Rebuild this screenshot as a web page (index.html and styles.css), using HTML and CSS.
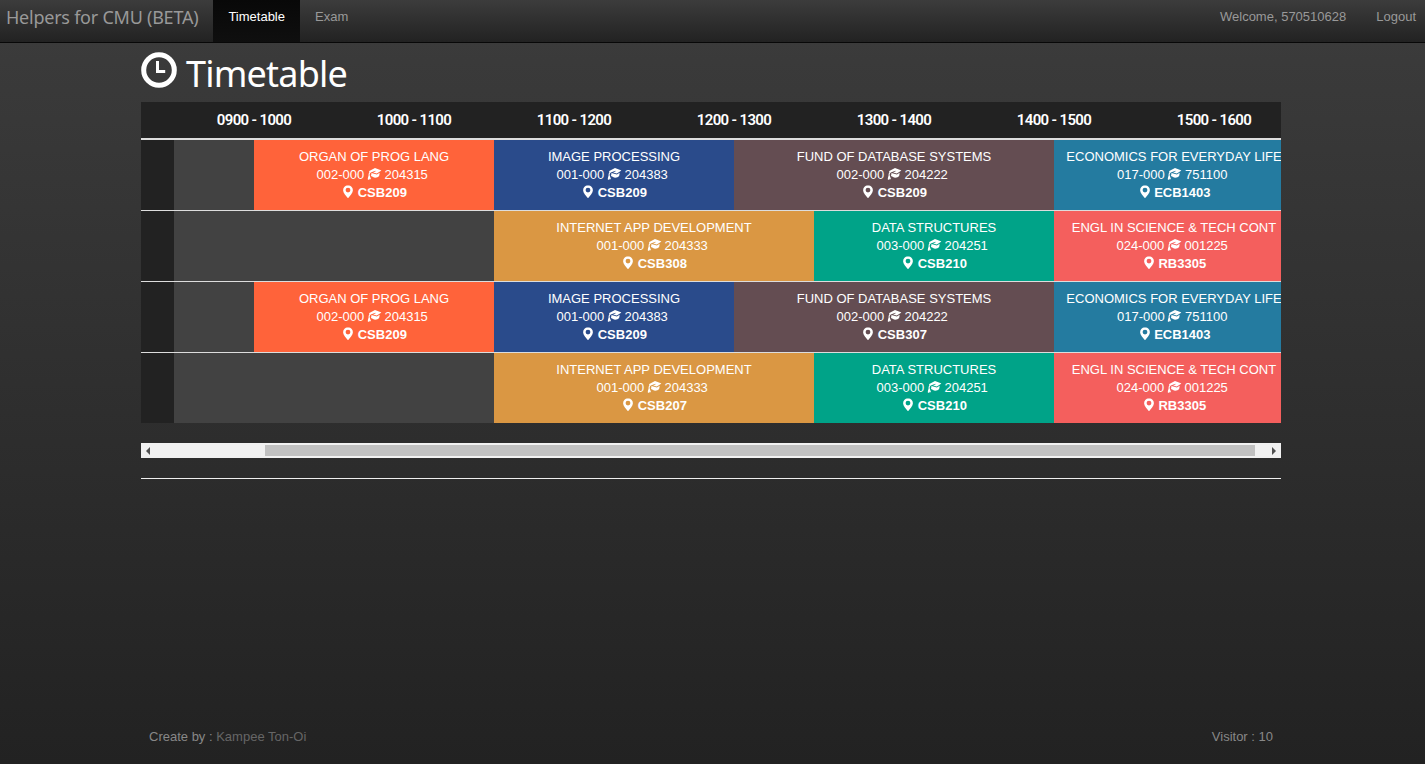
FILE: index.html
```html
<!DOCTYPE html>
<html lang="en">
<head>
<meta charset="utf-8">
<title>Timetable</title>
<link rel="stylesheet" href="styles.css">
</head>
<body>
<svg class="defs" width="0" height="0">
  <symbol id="cap" viewBox="0 0 14 12"><path d="M1.300 3.300 7.500 0 14 2.400 9.300 5.600 5.600 4.500 8.200 3.300 7.900 2.700 3.300 4.400C2.200 5.200 2 6.300 2.300 7.700L3.600 11.400 2.200 10.700 1.600 12 0 11.300 1.100 7.600C1 5.800 1.300 4.700 2.200 4zM4 4.900 9.400 6.500 12.200 4.800 11.700 7.800C9.900 10.200 7 10.300 5.200 8.800L3.500 8.100z"/></symbol>
  <symbol id="pin" viewBox="0 0 11 13"><path fill-rule="evenodd" d="M5.500 0a4.900 4.900 0 0 1 4.900 4.900C10.400 7.700 7.700 9.800 5.500 13 3.300 9.800.6 7.700.6 4.900A4.900 4.900 0 0 1 5.500 0zm0 2.400a2.400 2.400 0 1 0 0 4.800 2.400 2.400 0 0 0 0-4.800z"/></symbol>
</svg>
<nav class="navbar">
  <a class="brand">Helpers for CMU (BETA)</a>
  <a class="nav-item active">Timetable</a>
  <a class="nav-item">Exam</a>
  <a class="nav-item push">Welcome, 570510628</a>
  <a class="nav-item last">Logout</a>
</nav>
<main class="container">
  <h1 class="title"><svg class="clock" viewBox="0 0 36 36"><circle cx="18" cy="18" r="15.300"/><path d="M16.500 9v10.500h7.700"/></svg><span>Timetable</span></h1>
  <section class="timetable" id="timetable"></section>
  <div class="scrollbar"><span class="arrow left"></span><span class="thumb"></span><span class="arrow right"></span></div>
  <hr class="rule">
</main>
<footer class="footer"><span>Create by : <a class="author">Kampee Ton-Oi</a></span><span>Visitor : 10</span></footer>
<script src="app.js"></script>
</body>
</html>
```
FILE: styles.css
```css
* { box-sizing: border-box; }
html { height: 100%; }
body {
  margin: 0; height: 100%; display: flex; flex-direction: column; overflow: hidden;
  font: 13px/18px "Liberation Sans", Arial, sans-serif; color: #fff;
  background: linear-gradient(#3d3d3d 0%, #3a3a3a 8%, #222 100%);
}
.defs { position: absolute; }
.navbar {
  height: 43px; flex: none; display: flex; border-bottom: 1px solid #080808;
  background: linear-gradient(#3c3c3c, #222); color: #999;
}
.brand { width: 213.4px; padding: 7px 0 0 6px; font: 18px/20px "Noto Sans", sans-serif; letter-spacing: -.24px; white-space: nowrap; }
.nav-item { padding: 8px 15px 0; }
.active { color: #fff; background: linear-gradient(#080808, #0f0f0f); }
.push { margin-left: auto; }
.last { padding-right: 9px; }
.container { width: 1140px; margin-left: 141px; }
.title { margin: 0; height: 59px; display: flex; font: 36px/40px "Noto Sans", sans-serif; letter-spacing: -.8px; }
.title span { padding: 11px 0 0 9px; }
.clock { width: 36px; height: 36px; margin-top: 9px; fill: none; stroke: #fff; stroke-width: 5; }
.clock path { stroke-width: 3; }
.timetable { overflow: hidden; background: #222; }
.row { display: flex; border-top: 1px solid #ddd; }
.head { height: 36px; border: 0; padding-left: 33px; font: 15px/36px Roboto, sans-serif; font-weight: 600; letter-spacing: -.65px; }
.head span { width: 160px; flex: none; text-align: center; }
.head + .row { border-top-width: 2px; }
.day { width: 33px; flex: none; }
.slot { height: 70px; flex: none; padding: 8px 0; text-align: center; white-space: nowrap; }
.span-1 { width: 80px; }
.span-3 { width: 240px; }
.span-4 { width: 320px; }
.empty { background: #424242; }
.orange { background: #ff633a; }
.blue { background: #2a4b8b; }
.plum { background: #644d52; }
.teal { background: #247ba0; }
.gold { background: #da9743; }
.green { background: #00a388; }
.coral { background: #f45f5d; }
.icon { width: 13px; height: 12px; fill: #fff; vertical-align: -1px; overflow: visible; }
.scrollbar { height: 15px; margin-top: 20px; background: #f1f1f1; display: flex; align-items: center; }
.thumb { width: 990px; height: 11px; background: #c1c1c1; }
.arrow { border: 4px solid transparent; height: 8px; }
.left { border-left: 0; border-right-color: #505050; margin: 0 115px 0 5px; }
.right { border-right: 0; border-left-color: #505050; margin-left: 17px; }
.rule { margin: 20px 0 0; border: 0; height: 1px; background: #eee; }
.footer { margin: auto 144px 0 141px; height: 36px; padding: 0 8px; display: flex; justify-content: space-between; color: #888; }
.author { color: #666; }
```
FILE: app.js
```js
const course = (color, span, name, section, code, room) => ({ color, span, name, section, code, room });
const gap = span => ({ span });

const organ = course("orange", 3, "ORGAN OF PROG LANG", "002-000", "204315", "CSB209");
const image = course("blue", 3, "IMAGE PROCESSING", "001-000", "204383", "CSB209");
const database = room => course("plum", 4, "FUND OF DATABASE SYSTEMS", "002-000", "204222", room);
const econ = course("teal", 3, "ECONOMICS FOR EVERYDAY LIFE", "017-000", "751100", "ECB1403");
const internet = room => course("gold", 4, "INTERNET APP DEVELOPMENT", "001-000", "204333", room);
const data = course("green", 3, "DATA STRUCTURES", "003-000", "204251", "CSB210");
const english = course("coral", 3, "ENGL IN SCIENCE &amp; TECH CONT", "024-000", "001225", "RB3305");

const days = [
  [gap(1), organ, image, database("CSB209"), econ],
  [gap(4), internet("CSB308"), data, english],
  [gap(1), organ, image, database("CSB307"), econ],
  [gap(4), internet("CSB207"), data, english]
];
const icons = {
  cap: `<svg class="icon"><use href="#cap" width="14" height="12" x="-0.5" y="0"/></svg>`,
  pin: `<svg class="icon"><use href="#pin" width="11" height="13" x="1.5" y="-0.7"/></svg>`
};
const slot = c => c.name
  ? `<div class="slot span-${c.span} ${c.color}">${c.name}<br>${c.section} ${icons.cap} ${c.code}&nbsp;<br>${icons.pin} <b>${c.room}</b></div>`
  : `<div class="slot span-${c.span} empty"></div>`;
const hours = [9, 10, 11, 12, 13, 14, 15].map(h => `<span>${String(h).padStart(2, "0")}00 - ${h + 1}00</span>`);

document.getElementById("timetable").innerHTML =
  `<div class="row head">${hours.join("")}</div>` +
  days.map(d => `<div class="row"><div class="day"></div>${d.map(slot).join("")}</div>`).join("");
```
